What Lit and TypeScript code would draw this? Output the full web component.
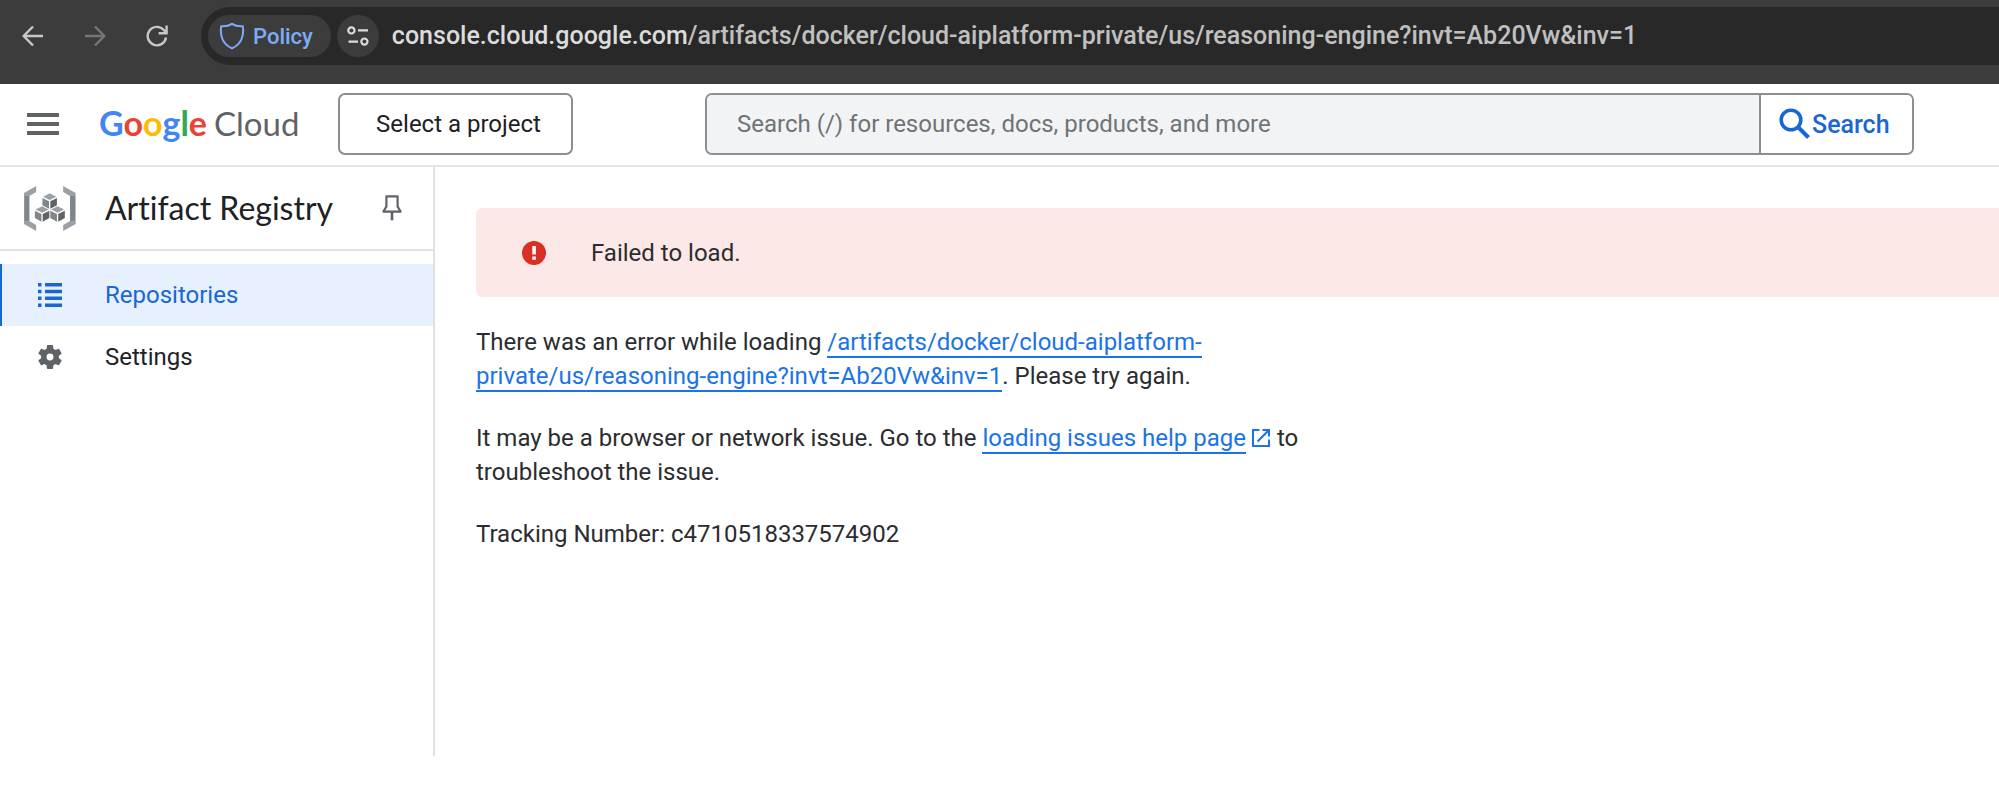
import { LitElement, html, css, svg } from "lit";
import { customElement } from "lit/decorators.js";

const isoCube = (cx: number, top: number) => svg`
  <path fill="#9aa0a6" d="M${cx} ${top}l20 10l-20 10l-20-10z"/>
  <path fill="#80868b" d="M${cx - 22} ${top + 14}l20 10v23l-20-11z"/>
  <path fill="#5f6368" d="M${cx + 22} ${top + 14}l-20 10v23l20-11z"/>`;

@customElement("browser-bar")
class BrowserBar extends LitElement {
  static styles = css`
    :host {
      display: flex;
      align-items: center;
      height: 84px;
      box-sizing: border-box;
      padding: 7px 0 19px 12px;
      background: #3c3c3c;
      overflow: hidden;
      font-family: Roboto, sans-serif;
    }
    button {
      border: 0;
      background: none;
      padding: 0;
      font: inherit;
      cursor: pointer;
    }
    svg { display: block; }
    .nav { display: flex; gap: 20px; }
    .nav button {
      width: 42px;
      height: 42px;
      display: grid;
      place-items: center;
      color: #c7c7c7;
    }
    .nav .off { color: #757575; }
    .omnibox {
      flex: 1;
      display: flex;
      align-items: center;
      height: 58px;
      margin-left: 23px;
      padding-left: 7px;
      box-sizing: border-box;
      border-radius: 29px 0 0 29px;
      background: #282828;
    }
    .chip {
      display: flex;
      align-items: center;
      gap: 8px;
      height: 42px;
      padding: 0 18px 0 11px;
      border-radius: 21px;
      background: #3c3c3c;
      color: #7cacf8;
      font-size: 22px;
      font-weight: 500;
    }
    .site {
      width: 42px;
      height: 42px;
      margin: 0 13px 0 6px;
      border-radius: 50%;
      background: #3c3c3c;
      display: grid;
      place-items: center;
    }
    .url {
      color: #c0c0c0;
      font-size: 25px;
      font-weight: 500;
      line-height: 28px;
      white-space: nowrap;
    }
    .host { color: #dcdcdc; }
  `;

  render() {
    return html`
      <nav class="nav" aria-label="History">
        <button aria-label="Back">
          <svg width="22" height="22" viewBox="0 0 22 22" fill="none" stroke="currentColor" stroke-width="2.4">
            <path d="M21 11H2M11 1.5L1.7 11L11 20.5" />
          </svg>
        </button>
        <button class="off" aria-label="Forward" disabled>
          <svg width="22" height="22" viewBox="0 0 22 22" fill="none" stroke="currentColor" stroke-width="2.4">
            <path d="M1 11H20M11 1.5L20.3 11L11 20.5" />
          </svg>
        </button>
        <button aria-label="Reload">
          <svg width="22" height="22" viewBox="0 0 22 22" fill="none" stroke="currentColor" stroke-width="2.4">
            <path d="M20 12.5A9.2 9.2 0 1 1 17.8 5L20 7.5M20.6 0.5V8.2H12.6" />
          </svg>
        </button>
      </nav>
      <div class="omnibox">
        <button class="chip">
          <svg width="26" height="28" viewBox="0 0 26 28" fill="none" stroke="currentColor" stroke-width="2" stroke-linejoin="round">
            <path d="M13 1.8C10 3.8 6 4.4 2.2 4.2C1.6 8 1.8 13 3.6 17.4C5.6 21.8 9 24.6 13 26.4C17 24.6 20.4 21.8 22.4 17.4C24.2 13 24.4 8 23.8 4.2C20 4.4 16 3.8 13 1.8Z" />
          </svg>
          <span>Policy</span>
        </button>
        <button class="site" aria-label="View site information">
          <svg width="22" height="20" viewBox="0 0 22 20" fill="none" stroke="#dcdcdc" stroke-width="2.2">
            <circle cx="4.4" cy="4.4" r="3.1" />
            <path d="M11 4.4H21M1.5 15.6H11" />
            <circle cx="17.4" cy="15.6" r="3.1" />
          </svg>
        </button>
        <span class="url"><span class="host">console.cloud.google.com</span>/artifacts/docker/cloud-aiplatform-private/us/reasoning-engine?invt=Ab20Vw&amp;inv=1</span>
      </div>
    `;
  }
}

@customElement("console-header")
class ConsoleHeader extends LitElement {
  static styles = css`
    :host {
      display: flex;
      align-items: center;
      height: 83px;
      box-sizing: border-box;
      padding: 0 85px 1px 27px;
      border-bottom: 2px solid #e4e5ea;
      font-family: Roboto, sans-serif;
      font-size: 24px;
    }
    button, input { font: inherit; }
    svg { display: block; }
    .menu {
      border: 0;
      background: none;
      padding: 0;
      cursor: pointer;
    }
    .logo {
      display: flex;
      align-items: baseline;
      gap: 7px;
      width: 200px;
      margin: 0 39px 0 40px;
      padding-bottom: 2px;
      font-family: Lato, sans-serif;
      line-height: 40px;
      text-decoration: none;
      white-space: nowrap;
    }
    .google { font-size: 34px; font-weight: 700; }
    .cloud { font-size: 33px; color: #5f6368; }
    .blue { color: #4285f4; }
    .red { color: #ea4335; }
    .yellow { color: #fbbc04; }
    .green { color: #34a853; }
    .project {
      width: 235px;
      height: 62px;
      padding: 0 0 0 6px;
      border: 2px solid #8a8f94;
      border-radius: 7px;
      background: #fff;
      color: #202124;
      cursor: pointer;
    }
    .search {
      flex: 1;
      display: flex;
      height: 62px;
      margin-left: 132px;
      box-sizing: border-box;
      border: 2px solid #8a8f94;
      border-radius: 7px;
      overflow: hidden;
    }
    .search input {
      flex: 1;
      min-width: 0;
      border: 0;
      outline: 0;
      padding: 0 30px;
      background: #f1f3f4;
      color: #202124;
    }
    .search input::placeholder { color: #6f7377; opacity: 1; }
    .go {
      display: flex;
      align-items: center;
      gap: 2px;
      width: 153px;
      padding: 0 0 0 17px;
      border: 0;
      border-left: 2px solid #8a8f94;
      background: #fff;
      color: #1967d2;
      font-size: 25px;
      font-weight: 500;
      cursor: pointer;
    }
  `;

  render() {
    return html`
      <button class="menu" aria-label="Navigation menu">
        <svg width="32" height="22" viewBox="0 0 32 22" fill="#5f6368">
          <path d="M0 0h32v4H0zM0 9h32v4H0zM0 18h32v4H0z" />
        </svg>
      </button>
      <a class="logo" href="#" aria-label="Google Cloud">
        <span class="google"><span class="blue">G</span><span class="red">o</span><span class="yellow">o</span><span class="blue">g</span><span class="green">l</span><span class="red">e</span></span>
        <span class="cloud">Cloud</span>
      </a>
      <button class="project">Select a project</button>
      <form class="search" role="search" @submit=${(e: Event) => e.preventDefault()}>
        <input type="text" aria-label="Search" placeholder="Search (/) for resources, docs, products, and more" />
        <button class="go">
          <svg width="32" height="32" viewBox="0 0 32 32" fill="none" stroke="currentColor">
            <circle cx="13" cy="12" r="9.8" stroke-width="3.6" />
            <path d="M20 19L30.5 29.5" stroke-width="4" />
          </svg>
          <span>Search</span>
        </button>
      </form>
    `;
  }
}

@customElement("registry-sidebar")
class RegistrySidebar extends LitElement {
  static styles = css`
    :host {
      display: block;
      width: 435px;
      box-sizing: border-box;
      border-right: 2px solid #dfe1e5;
      font-family: Roboto, sans-serif;
      font-size: 24px;
      color: #202124;
    }
    svg { display: block; }
    .head {
      display: flex;
      align-items: center;
      height: 84px;
      box-sizing: border-box;
      padding: 0 31px 0 24px;
      border-bottom: 2px solid #dfe1e5;
    }
    h1 {
      flex: 1;
      margin: 0 0 0 29px;
      font-family: Lato, sans-serif;
      font-size: 32px;
      font-weight: 400;
      font-variant-ligatures: none;
      line-height: 40px;
    }
    .pin {
      border: 0;
      background: none;
      padding: 0;
      cursor: pointer;
    }
    ul {
      list-style: none;
      margin: 0;
      padding: 13px 0 0;
    }
    .item {
      display: flex;
      align-items: center;
      gap: 42px;
      height: 62px;
      padding-left: 35px;
      border-left: 2px solid transparent;
      color: inherit;
      text-decoration: none;
    }
    .active {
      border-color: #1967d2;
      background: #e6f0ff;
      color: #1967d2;
    }
  `;

  render() {
    return html`
      <div class="head">
        <svg width="52" height="45" viewBox="71 77 158 136" aria-hidden="true">
          <path fill="#9aa0a6" d="M108 77v18L87 107v76l21 12v18L71 192V98zM190 77v18l21 12v76l-21 12v18l38-21V98z" />
          <path fill="#80868b" d="M73 108l14-1v76l-14-1zM226 108l-15-1v76l15-1z" />
          ${isoCube(149, 99)}${isoCube(126, 138)}${isoCube(173, 138)}
        </svg>
        <h1>Artifact Registry</h1>
        <button class="pin" aria-label="Pin navigation">
          <svg width="20" height="26" viewBox="0 0 20 26" fill="none" stroke="#5f6368" stroke-width="2.2">
            <path d="M4.4 1.4H15.6V11.5L18.6 16.6H1.4L4.4 11.5Z" stroke-linejoin="round" />
            <path d="M10 16.6V25.4" stroke-width="2.6" />
          </svg>
        </button>
      </div>
      <ul>
        <li>
          <a class="item active" href="#" aria-current="page">
            <svg width="26" height="26" viewBox="0 0 26 26" fill="currentColor" aria-hidden="true">
              <path d="M1 1h3.5v3.5H1zM8 1h17v3.5H8zM1 7.8h3.5v3.5H1zM8 7.8h17v3.5H8zM1 14.6h3.5v3.5H1zM8 14.6h17v3.5H8zM1 21.4h3.5v3.5H1zM8 21.4h17v3.5H8z" />
            </svg>
            <span>Repositories</span>
          </a>
        </li>
        <li>
          <a class="item" href="#">
            <svg width="26" height="26" viewBox="1.5 1.5 21 21" fill="#5f6368" aria-hidden="true">
              <path d="M19.14 12.94c.04-.3.06-.61.06-.94 0-.32-.02-.64-.07-.94l2.03-1.58c.18-.14.23-.41.12-.61l-1.92-3.32c-.12-.22-.37-.29-.59-.22l-2.39.96c-.5-.38-1.03-.7-1.62-.94l-.36-2.54c-.04-.24-.24-.41-.48-.41h-3.84c-.24 0-.43.17-.47.41l-.36 2.54c-.59.24-1.13.57-1.62.94l-2.39-.96c-.22-.08-.47 0-.59.22L2.74 8.87c-.12.21-.08.47.12.61l2.03 1.58c-.05.3-.09.63-.09.94s.02.64.07.94l-2.03 1.58c-.18.14-.23.41-.12.61l1.92 3.32c.12.22.37.29.59.22l2.39-.96c.5.38 1.03.7 1.62.94l.36 2.54c.05.24.24.41.48.41h3.84c.24 0 .44-.17.47-.41l.36-2.54c.59-.24 1.13-.56 1.62-.94l2.39.96c.22.08.47 0 .59-.22l1.92-3.32c.12-.22.07-.47-.12-.61l-2.01-1.58zM12 14.8A2.8 2.8 0 1 1 12 9.2a2.8 2.8 0 0 1 0 5.6z" />
            </svg>
            <span>Settings</span>
          </a>
        </li>
      </ul>
    `;
  }
}

@customElement("load-error")
class LoadError extends LitElement {
  static styles = css`
    :host {
      display: block;
      padding: 41px 0 0 41px;
      font-family: Roboto, sans-serif;
      font-size: 24px;
      line-height: 34px;
      color: #2b2c2f;
    }
    .alert {
      display: flex;
      align-items: center;
      gap: 45px;
      height: 89px;
      padding-left: 46px;
      border-radius: 6px 0 0 6px;
      background: #fce8e6;
    }
    .alert svg { display: block; }
    .text {
      max-width: 840px;
      padding-top: 28px;
    }
    p { margin: 0 0 28px; }
    a {
      color: #1a73e8;
      text-decoration: none;
      border-bottom: 2px solid currentColor;
    }
    .ext {
      width: 18px;
      height: 18px;
      margin: 0 1px 0 6px;
      vertical-align: -1px;
    }
  `;

  render() {
    return html`
      <div class="alert" role="alert">
        <svg width="24" height="24" viewBox="0 0 24 24" aria-hidden="true">
          <circle cx="12" cy="12" r="12" fill="#d93025" />
          <path fill="#fff" d="M10.3 5h3.6v8.6h-3.6zM10.3 15.4h3.6v3.4h-3.6z" />
        </svg>
        <span>Failed to load.</span>
      </div>
      <div class="text">
        <p>There was an error while loading <a href="#">/artifacts/docker/cloud-aiplatform-<wbr />private/us/reasoning-engine?invt=Ab20Vw&amp;inv=1</a>. Please try again.</p>
        <p>It may be a browser or network issue. Go to the <a href="#">loading issues help page</a><svg class="ext" viewBox="0 0 18 18" fill="none" stroke="#1a73e8" stroke-width="2" aria-hidden="true"><path d="M7.5 1H1V17H17V10.5M10.5 1H17V7.5M17 1L5.5 12.5" /></svg> to troubleshoot the issue.</p>
        <p>Tracking Number: c4710518337574902</p>
      </div>
    `;
  }
}

@customElement("app-root")
class AppRoot extends LitElement {
  static styles = css`
    :host {
      display: flex;
      flex-direction: column;
      min-height: 100vh;
      box-sizing: border-box;
      padding-bottom: 54px;
      background: #fff;
    }
    .body {
      flex: 1;
      display: flex;
    }
    registry-sidebar { flex: none; }
    load-error { flex: 1; min-width: 0; }
  `;

  render() {
    return html`
      <browser-bar></browser-bar>
      <console-header></console-header>
      <main class="body">
        <registry-sidebar></registry-sidebar>
        <load-error></load-error>
      </main>
    `;
  }
}
